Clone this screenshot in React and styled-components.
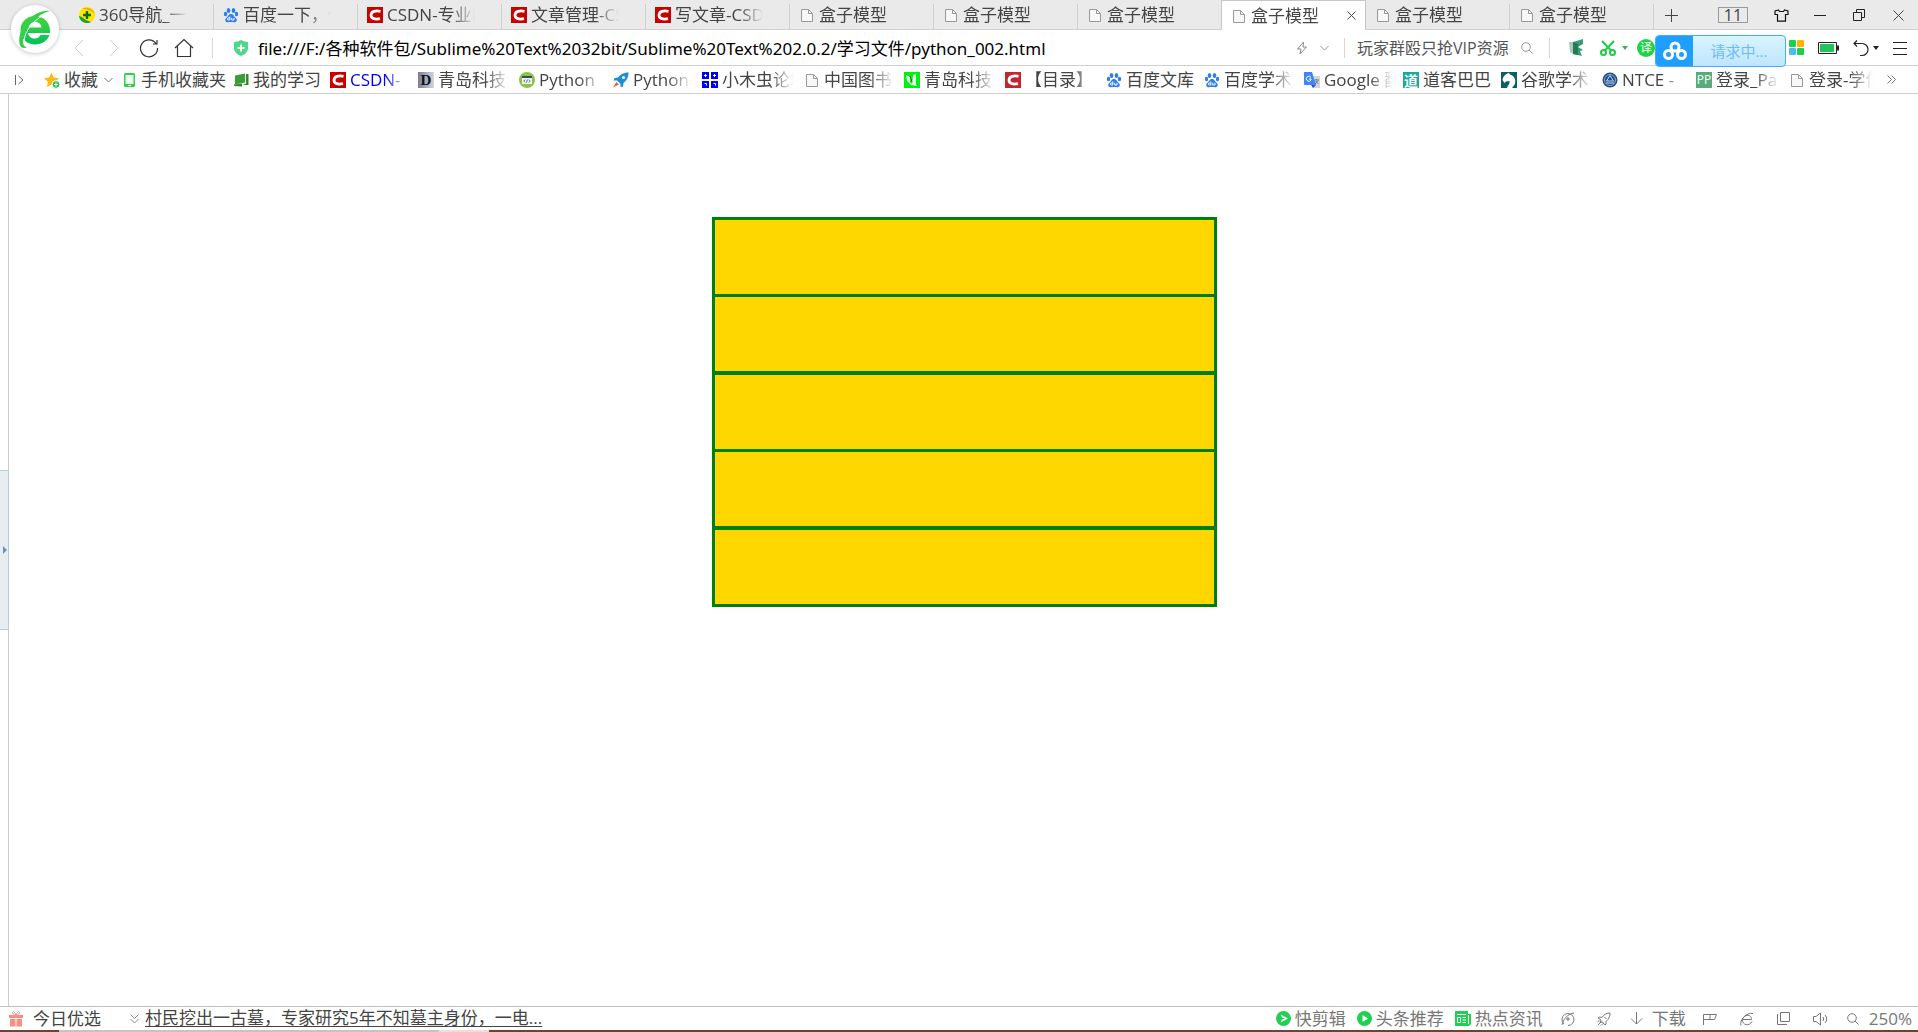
import React from "react";
import styled, { createGlobalStyle, css } from "styled-components";

const GlobalStyle = createGlobalStyle`
  * { box-sizing: border-box; }
  html, body, #root { height: 100%; }
  body {
    margin: 0;
    background: #fff;
    color: #444;
    font-family: "Open Sans", "Noto Sans CJK SC", sans-serif;
    font-size: 17px;
    line-height: 24px;
    overflow: hidden;
  }
  button, input { font: inherit; color: inherit; border: 0; background: none; padding: 0; margin: 0; }
  a { color: inherit; text-decoration: none; }
  svg { display: block; flex: none; }
`;

const fade = css`
  mask-image: linear-gradient(to right, #000 calc(100% - 24px), transparent 100%);
`;

const Window = styled.div`
  display: flex;
  flex-direction: column;
  height: 100vh;
  position: relative;
`;

const LogoButton = styled.button`
  position: absolute;
  left: 11px;
  top: 5px;
  z-index: 2;
  width: 48px;
  height: 48px;
  border-radius: 50%;
  background: #fff;
  box-shadow: 0 1px 4px rgba(0, 0, 0, 0.22);
  display: grid;
  place-items: center;
`;

/* Tab strip */
const TabStrip = styled.header`
  display: flex;
  align-items: center;
  height: 30px;
  padding-left: 70px;
  background: #eaeaea;
  box-shadow: inset 0 -1px #cfcfcf;
  flex: none;
`;

const Tabs = styled.nav`
  display: flex;
  min-width: 0;
`;

const Tab = styled.button`
  display: flex;
  align-items: center;
  gap: 4px;
  flex: 0 1 144px;
  width: 144px;
  min-width: 0;
  height: 30px;
  padding: 0 6px 0 9px;
  text-align: left;
  background: linear-gradient(#cfcfcf, #cfcfcf) right 4px / 1px 25px no-repeat;
  ${(p) => p.$active && css`
    background: #fff;
    border: 1px solid #c6c6c6;
    border-bottom: 0;
    margin-left: -1px;
    width: 145px;
    flex-basis: 145px;
  `}
`;

const TabLabel = styled.span`
  width: 88px;
  overflow: hidden;
  white-space: nowrap;
  ${fade}
`;

const IconSlot = styled.span`
  display: grid;
  place-items: center;
  width: 16px;
  height: 16px;
  flex: none;
`;

const CloseSlot = styled.span`
  margin-left: auto;
  padding-right: 3px;
`;

const IconButton = styled.button`
  display: grid;
  place-items: center;
  flex: none;
  width: ${(p) => p.$w || 24}px;
  height: 24px;
`;

const WindowControls = styled.div`
  display: flex;
  align-items: center;
  gap: 15px;
  margin-left: auto;
  padding: 0 8px 0 0;
`;

const TabCount = styled.button`
  width: 30px;
  height: 16px;
  border: 1px solid #999;
  font-size: 16px;
  line-height: 14px;
  margin-right: 6px;
`;

/* Address row */
const Toolbar = styled.div`
  display: flex;
  align-items: center;
  height: 36px;
  padding: 0 11px 0 67px;
  border-bottom: 1px solid #cfcfcf;
  flex: none;
`;

const NavButtons = styled.div`
  display: flex;
  gap: 11px;
`;

const Divider = styled.span`
  width: 1px;
  height: 20px;
  background: #d6d6d6;
  flex: none;
`;

const AddressField = styled.label`
  display: flex;
  align-items: center;
  gap: 10px;
  flex: 1;
  min-width: 0;
  padding-left: 21px;
`;

const AddressInput = styled.input`
  flex: 1;
  min-width: 0;
  height: 26px;
  color: #000;
  font-family: "Noto Sans", "Noto Sans CJK SC", sans-serif;
  outline: 0;
`;

const SearchField = styled.label`
  display: flex;
  align-items: center;
  gap: 8px;
  padding: 0 16px 0 12px;
  font-size: 16px;
`;

const SearchInput = styled.input`
  width: 156px;
  height: 24px;
  outline: 0;
  &::placeholder { color: #555; opacity: 1; }
`;

const Extensions = styled.div`
  display: flex;
  align-items: center;
  flex: none;
  gap: ${(p) => p.$gap}px;
  padding-left: ${(p) => p.$pad || 0}px;
`;

const Translate = styled.button`
  width: 18px;
  height: 18px;
  border-radius: 50%;
  background: #22d245;
  color: #fff;
  font-size: 12px;
  line-height: 18px;
  text-align: center;
`;

const CloudSlot = styled.div`
  position: relative;
  width: 131px;
  height: 32px;
  flex: none;
`;

const CloudWidget = styled.button`
  position: absolute;
  inset: 3px 0 -3px 0;
  z-index: 1;
  display: flex;
  align-items: stretch;
  border: 1px solid #4aaafc;
  border-radius: 4px;
  overflow: hidden;
  background: linear-gradient(#d9f4ff, #bfe6fd);
  color: #6cbcfa;
  font-size: 15px;
  line-height: 30px;
`;

const CloudMark = styled.span`
  display: grid;
  place-items: center;
  width: 37px;
  background: #1e9fff;
`;

const CloudText = styled.span`
  flex: 1;
  text-align: center;
`;

/* Bookmarks */
const BookmarkBar = styled.nav`
  display: flex;
  align-items: center;
  height: 28px;
  padding: 0 19px 0 10px;
  border-bottom: 1px solid #cfcfcf;
  flex: none;
`;

const BookmarkStart = styled.div`
  display: flex;
  align-items: center;
  gap: 6px;
  padding-left: 17px;
  flex: none;
`;

const Bookmarks = styled.div`
  display: flex;
  gap: 10px;
  padding-left: 8px;
  min-width: 0;
  overflow: hidden;
`;

const Bookmark = styled.a`
  display: flex;
  align-items: center;
  gap: 4px;
  flex: none;
  color: ${(p) => p.$color || "inherit"};
`;

const BookmarkLabel = styled.span`
  width: ${(p) => p.$w}px;
  white-space: nowrap;
  ${(p) => p.$fade && css`
    overflow: hidden;
    ${fade}
  `}
`;

const Spacer = styled.span`
  flex: 1;
`;

/* Page area */
const Viewport = styled.main`
  display: flex;
  flex: 1;
  min-height: 0;
`;

const Gutter = styled.aside`
  display: flex;
  align-items: center;
  width: 9px;
  border-right: 1px solid #ccc;
  flex: none;
`;

const GutterHandle = styled.button`
  display: flex;
  align-items: center;
  justify-content: flex-end;
  width: 9px;
  height: 160px;
  flex: none;
  padding-right: 1px;
  background: #e8edf2;
  border: 1px solid #b9ccd5;
  border-left: 0;
`;

const Page = styled.section`
  flex: 1;
  padding: 123px 0 0 2px;
`;

const BoxList = styled.ul`
  list-style: none;
  width: 505px;
  margin: 0 auto;
  padding: 0;
`;

const Box = styled.li`
  height: 80px;
  background: gold;
  border: 3px solid green;
  margin-top: -3px;
  &:nth-child(odd) { margin-top: -2px; }
  &:first-child { margin-top: 0; }
`;

/* Status bar */
const StatusBar = styled.footer`
  display: flex;
  align-items: center;
  height: 24px;
  padding: 0 6px 0 8px;
  border-top: 1px solid #bfbfbf;
  flex: none;
`;

const StatusLink = styled.a`
  display: flex;
  align-items: center;
  gap: ${(p) => p.$gap || 4}px;
  height: 23px;
  white-space: nowrap;
`;

const Headline = styled.a`
  margin-left: 6px;
  height: 23px;
  line-height: 22px;
  white-space: nowrap;
  text-decoration: underline;
  text-decoration-thickness: 1px;
  text-underline-offset: 2px;
`;

const StatusGroup = styled.div`
  display: flex;
  align-items: center;
  gap: ${(p) => p.$gap}px;
  color: #777;
  margin-left: ${(p) => p.$left}px;
`;

const Taskbar = styled.div`
  height: 2px;
  flex: none;
  background: linear-gradient(to right, #6b452c 59px, #c4c4c4 59px, #c4c4c4 439px, #eadfd9 439px, #eadfd9 489px, #6b452c 489px);
`;

/* Icons */
const Stroke = ({ w = 16, h = 16, c = "#444", sw = 1, children, fill = "none" }) => (
  <svg width={w} height={h} viewBox={`0 0 ${w} ${h}`} fill={fill} stroke={c} strokeWidth={sw} aria-hidden="true">
    {children}
  </svg>
);

const BrowserLogo = () => (
  <svg width="34" height="40" viewBox="0 0 34 40" aria-hidden="true">
    <defs>
      <linearGradient id="lg" x1="0" y1="0" x2="0" y2="1">
        <stop offset="0" stopColor="#46d63c" />
        <stop offset="1" stopColor="#00c25a" />
      </linearGradient>
    </defs>
    <path fill="url(#lg)" fillRule="evenodd" d="M17 7C9 7 2.500 13 2.500 21C2.500 29.500 9 35.500 17 35.500C24 35.500 29.500 31.500 31.500 26H22.500C21 28.500 19.300 29.500 17 29.500C13.300 29.500 10.500 27.500 10 24H32C33 14 26 7 17 7ZM10.300 18.500C11 15 14 12.800 17 12.800C20.500 12.800 23 15 23.500 18.500Z" />
    <path fill="#35d049" d="M32 2C22 0 8 9 3 22C0 30 1 37 4 38.500C6 39.400 8 39 9 38C5 38 4 33 6 27C9 17 19 5 32 2Z" />
    <path fill="none" stroke="#fff" strokeWidth="1" d="M28 5.500C18 9 10 18 7 27C6 31 6 34 7.500 36" />
  </svg>
);

const PageIcon = () => (
  <Stroke w={12} h={14} c="#999">
    <path d="M.5 1.500H7.500L11.500 5.500V13.500H.5Z" fill="#f8f8f8" />
    <path d="M7.500 1.500V5.500H11.500" />
  </Stroke>
);

const NavIcon = () => (
  <svg width="16" height="16" viewBox="0 0 16 16" aria-hidden="true">
    <circle cx="8" cy="8" r="8" fill="#ffe800" />
    <path d="M0 9C3 9 5 13 12 14.900A8 8 0 0 1 0 9Z" fill="#19a23a" />
    <path d="M3 2C8-1 15 2 16 8C13 3 8 2 3 2Z" fill="#f5a800" />
    <path d="M8 4V12M4 8H12" stroke="#066b24" strokeWidth="2.400" />
  </svg>
);

const PawIcon = () => (
  <svg width="16" height="16" viewBox="0 0 16 16" fill="#2f7df0" aria-hidden="true">
    <ellipse cx="5.500" cy="3.500" rx="1.800" ry="2.500" />
    <ellipse cx="10.500" cy="3.500" rx="1.800" ry="2.500" />
    <ellipse cx="2.500" cy="7" rx="1.700" ry="2.200" />
    <ellipse cx="13.500" cy="7" rx="1.700" ry="2.200" />
    <path d="M8 7C5.500 7 5 9.500 3.500 10.800C1 13 2.500 15.500 5 15.300C7 15 9 15 11 15.300C13.500 15.500 15 13 12.500 10.800C11 9.500 10.500 7 8 7Z" />
    <path d="M6.800 9.500V13H5.300C4 13 4 11 5.300 11H6.800M8.700 10.800V13H11V10.800" stroke="#fff" fill="none" />
  </svg>
);

const CIcon = ({ bg = "#c80000" }) => (
  <svg width="16" height="16" viewBox="0 0 16 16" aria-hidden="true">
    <path fill={bg} d="M0 0H16V16H0Z" />
    <path d="M13.500 4.300C9 3.200 4 4.300 4 8.200C4 12 8.500 12.600 13 11.600" fill="none" stroke="#fff" strokeWidth="2.800" />
  </svg>
);

const LetterIcon = styled.span`
  width: 16px;
  height: 16px;
  background: ${(p) => p.$bg};
  color: ${(p) => p.$fg};
  font: ${(p) => p.$font};
  line-height: 16px;
  text-align: center;
  overflow: hidden;
`;

const StarIcon = () => (
  <svg width="16" height="17" viewBox="0 0 16 17" aria-hidden="true">
    <path d="M7.500 .5L9.800 5.500L15 6.200L11.200 9.800L12 15L7.500 12.600L3 15L3.800 9.800L0 6.200L5.200 5.500Z" fill="#fdb813" />
    <circle cx="12" cy="12.500" r="3.900" fill="#2cc552" stroke="#fff" />
    <path d="M12 10.500V14.500M10 12.500H14" stroke="#fff" />
  </svg>
);

const PhoneIcon = () => (
  <svg width="11" height="14" viewBox="0 0 11 14" aria-hidden="true">
    <rect width="11" height="14" rx="1.500" fill="#2fd04e" />
    <path d="M1.500 2H9.500V11H1.500Z" fill="#effff0" />
    <path d="M4 12.500H7" stroke="#fff" />
  </svg>
);

const BookIcon = () => (
  <svg width="15" height="14" viewBox="0 0 15 14" aria-hidden="true">
    <path d="M1 2.500L11 .5V9.500L1 11.500Z" fill="#3a9e35" />
    <path d="M12 1H14.500V12H9L12 10.500Z" fill="#2f8b2b" />
    <path d="M0 11L1 11.500L8 10.500V13.500L0 13Z" fill="#2f8b2b" />
  </svg>
);

const CodeIcon = () => (
  <svg width="16" height="16" viewBox="0 0 16 16" aria-hidden="true">
    <circle cx="8" cy="8" r="8" fill="#8bc34a" />
    <path d="M3 4H13V12H3Z" fill="#f0f4f5" />
    <path d="M3 4H13V6H3Z" fill="#31505c" />
    <path d="M6.200 7.500L4.800 9L6.200 10.500M9.800 7.500L11.200 9L9.800 10.500M8.500 7.500L7.500 10.500" fill="none" stroke="#31505c" strokeWidth=".8" />
  </svg>
);

const RocketColor = () => (
  <svg width="16" height="16" viewBox="0 0 16 16" aria-hidden="true">
    <path d="M15.500 .5C10 .5 7 3 5 5.500L1.500 6L.5 8.500L4 8.500L7.500 12L7.500 15L10 14.500L10.500 11C13 9 15.500 6 15.500 .5Z" fill="#1b8fd6" />
    <circle cx="10.500" cy="5.500" r="1.600" fill="#fff" />
    <path d="M3.500 10L0 15.500L6 12.500Z" fill="#f0633c" />
  </svg>
);

const MuchongIcon = () => (
  <svg width="16" height="16" viewBox="0 0 16 16" aria-hidden="true">
    <path fill="#0000f5" d="M0 0H7V7H0ZM9 0H16V7H9ZM0 9H7V16H0ZM9 9H16V16H9Z" />
    <path d="M2 3.500H5M3.500 2V5M11 3.500H14M12.500 2V5M2.500 11.500H4.500V13.500M11.500 11.500H13.500V13.500" stroke="#fff" fill="none" />
  </svg>
);

const GreenUIcon = () => (
  <svg width="16" height="16" viewBox="0 0 16 16" aria-hidden="true">
    <path fill="#00f010" d="M0 0H16V16H0Z" />
    <path d="M2 3L6 5V10L8 12L9 3L12 2V12L13 14L7 13L3 9Z" fill="#e7fbe8" />
    <path d="M6 4L8 10" stroke="#167a25" />
  </svg>
);

const TranslateIcon = () => (
  <svg width="16" height="16" viewBox="0 0 16 16" aria-hidden="true">
    <path d="M6 4H16V16H9Z" fill="#d2d6dc" />
    <path d="M0 0H8L12 13H1Q0 13 0 12Z" fill="#4285f4" />
    <path d="M7 13H12L9 16Z" fill="#2a56c6" />
    <path d="M7 5.500A2.500 2.500 0 1 0 7 8V7H5" fill="none" stroke="#fff" />
    <path d="M10.500 8H15M12.700 7V8M14 8.500L11 12M11.500 9L14.500 12" stroke="#566" strokeWidth=".8" fill="none" />
  </svg>
);

const HorseIcon = () => (
  <svg width="16" height="16" viewBox="0 0 16 16" aria-hidden="true">
    <path fill="#0a5f5f" d="M0 0H16V16H0Z" />
    <path d="M1.500 8C2 4 5 1.500 8 1L9 2.500C13 3.500 15 7 14 12L11 16H6C7 13 9 12 8.500 9L5 9.500L3.500 11Z" fill="#fff" />
  </svg>
);

const NtceIcon = () => (
  <svg width="16" height="16" viewBox="0 0 16 16" aria-hidden="true">
    <circle cx="8" cy="8" r="7.500" fill="#1f4e8c" />
    <circle cx="8" cy="8" r="5.500" fill="none" stroke="#a9c0dd" strokeWidth=".8" />
    <path d="M8 3.500L4.500 9H11.500ZM4 11H12" fill="none" stroke="#c9d8ea" />
  </svg>
);

const ChevronDown = ({ c = "#777" }) => (
  <Stroke w={9} h={6} c={c}><path d="M.5 1L4.500 5L8.500 1" /></Stroke>
);

const SearchIcon = ({ c = "#999" }) => (
  <Stroke w={12} h={12} c={c}><circle cx="5" cy="5" r="4.300" /><path d="M8 8L11.500 11.500" /></Stroke>
);

const CloseIcon = ({ size = 10 }) => (
  <Stroke w={size} h={size} c="#444"><path d={`M.5 .5L${size - 0.5} ${size - 0.5}M${size - 0.5} .5L.5 ${size - 0.5}`} /></Stroke>
);

const TABS = [
  { icon: <NavIcon />, title: "360导航_一个主页" },
  { icon: <PawIcon />, title: "百度一下，你就知道" },
  { icon: <CIcon />, title: "CSDN-专业IT技术" },
  { icon: <CIcon />, title: "文章管理-CSDN" },
  { icon: <CIcon />, title: "写文章-CSDN" },
  { icon: <PageIcon />, title: "盒子模型" },
  { icon: <PageIcon />, title: "盒子模型" },
  { icon: <PageIcon />, title: "盒子模型" },
  { icon: <PageIcon />, title: "盒子模型", active: true },
  { icon: <PageIcon />, title: "盒子模型" },
  { icon: <PageIcon />, title: "盒子模型" },
];

const BOOKMARKS = [
  { icon: <PhoneIcon />, title: "手机收藏夹", w: 82, plain: true },
  { icon: <BookIcon />, title: "我的学习", w: 67, plain: true },
  { icon: <CIcon />, title: "CSDN-", w: 58, color: "#0000ee" },
  { icon: <LetterIcon $bg="linear-gradient(90deg,#7b7b93,#d5d5e0)" $fg="#111" $font="bold 15px 'Liberation Serif', serif">D</LetterIcon>, title: "青岛科技大学", w: 71 },
  { icon: <CodeIcon />, title: "Python", w: 64 },
  { icon: <RocketColor />, title: "Python基", w: 59 },
  { icon: <MuchongIcon />, title: "小木虫论坛", w: 72 },
  { icon: <PageIcon />, title: "中国图书馆", w: 70 },
  { icon: <GreenUIcon />, title: "青岛科技大", w: 71 },
  { icon: <CIcon bg="#c1272d" />, title: "【目录】", w: 71 },
  { icon: <PawIcon />, title: "百度文库", w: 68, plain: true },
  { icon: <PawIcon />, title: "百度学术_", w: 70 },
  { icon: <TranslateIcon />, title: "Google 翻", w: 69 },
  { icon: <LetterIcon $bg="#18a99a" $fg="#fff" $font="bold 14px 'Noto Sans CJK SC', sans-serif">道</LetterIcon>, title: "道客巴巴", w: 68, plain: true },
  { icon: <HorseIcon />, title: "谷歌学术镜", w: 71 },
  { icon: <NtceIcon />, title: "NTCE -", w: 64 },
  { icon: <LetterIcon $bg="#57ab7c" $fg="#fff" $font="12px 'Open Sans', sans-serif">PP</LetterIcon>, title: "登录_Pap", w: 63 },
  { icon: <PageIcon />, title: "登录-学信", w: 64 },
];

export default function App() {
  return (
    <Window>
      <GlobalStyle />
      <LogoButton aria-label="浏览器"><BrowserLogo /></LogoButton>

      <TabStrip>
        <Tabs>
          {TABS.map((tab, i) => (
            <Tab key={i} $active={tab.active}>
              <IconSlot>{tab.icon}</IconSlot>
              <TabLabel>{tab.title}</TabLabel>
              {tab.active && <CloseSlot><CloseIcon size={9} /></CloseSlot>}
            </Tab>
          ))}
        </Tabs>
        <IconButton $w={34} aria-label="新建标签">
          <Stroke w={13} h={13}><path d="M6.500 0V13M0 6.500H13" /></Stroke>
        </IconButton>
        <WindowControls>
          <TabCount>11</TabCount>
          <IconButton aria-label="皮肤">
            <Stroke w={15} h={13} c="#111" sw={1.2}><path d="M4.500 1L1 2V5.500H3.500V12.200H11.500V5.500H14V2L10.500 1L9.500 2.500H5.500Z" /></Stroke>
          </IconButton>
          <IconButton aria-label="最小化"><Stroke w={12} h={12} c="#222"><path d="M0 6.500H12" /></Stroke></IconButton>
          <IconButton aria-label="还原">
            <Stroke w={12} h={12} c="#222"><path d="M.5 3.500H8.500V11.500H.5ZM3.500 3.500V.5H11.500V8.500H8.500" /></Stroke>
          </IconButton>
          <IconButton aria-label="关闭"><CloseIcon size={11} /></IconButton>
        </WindowControls>
      </TabStrip>

      <Toolbar>
        <NavButtons>
          <IconButton aria-label="后退"><Stroke w={10} h={18} c="#ccc"><path d="M9 1L1 9L9 17" /></Stroke></IconButton>
          <IconButton aria-label="前进"><Stroke w={10} h={18} c="#ccc"><path d="M1 1L9 9L1 17" /></Stroke></IconButton>
          <IconButton aria-label="刷新">
            <Stroke w={20} h={20} sw={1.2} c="#333"><path d="M17 5.500A8.500 8.500 0 1 0 18.500 10M18 2V6H14" /></Stroke>
          </IconButton>
          <IconButton aria-label="主页">
            <Stroke w={20} h={20} sw={1.2} c="#333"><path d="M1 10L10 1.500L19 10M3.500 8.500V18.500H16.500V8.500" /></Stroke>
          </IconButton>
        </NavButtons>
        <Extensions $pad={16}><Divider /></Extensions>
        <AddressField>
          <svg width="14" height="16" viewBox="0 0 14 16" aria-hidden="true">
            <path d="M0 2Q4 2 7 0Q10 2 14 2V9Q13 14 7 16Q1 14 0 9Z" fill="#4cd989" />
            <path d="M7 4.500V11.500M3.500 8H10.500" stroke="#fff" strokeWidth="2" />
          </svg>
          <AddressInput aria-label="地址" defaultValue="file:///F:/各种软件包/Sublime%20Text%2032bit/Sublime%20Text%202.0.2/学习文件/python_002.html" />
        </AddressField>
        <Extensions $gap={12}>
          <Stroke w={12} h={14} c="#888"><path d="M7.500 1L1.500 8H5L4 13L10.500 6H7Z" /></Stroke>
          <ChevronDown c="#999" />
          <Extensions $pad={3}><Divider /></Extensions>
        </Extensions>
        <SearchField>
          <SearchInput aria-label="搜索" placeholder="玩家群殴只抢VIP资源" />
          <SearchIcon />
        </SearchField>
        <Divider />
        <Extensions $pad={19}>
          <svg width="14" height="18" viewBox="0 0 14 18" aria-hidden="true">
            <path d="M4 3L14 0V5L9 8L14 11L11 12L13 17L4 15Z" fill="#3b9c72" />
            <path d="M0 3L4 3V15L1 13Z" fill="#a8c8b8" />
            <path d="M4 3L9 5V16L4 15Z" fill="#267a56" />
          </svg>
        </Extensions>
        <Extensions $pad={17} $gap={6}>
          <Stroke w={16} h={16} c="#1fcc45" sw={2}>
            <circle cx="3.500" cy="12.500" r="2.500" /><circle cx="12.500" cy="12.500" r="2.500" /><path d="M2 1L11 10.500M14 1L5 10.500" />
          </Stroke>
          <svg width="6" height="4" viewBox="0 0 6 4"><path d="M0 0H6L3 4Z" fill="#2bbb4c" /></svg>
        </Extensions>
        <Extensions $pad={9}><Translate>译</Translate></Extensions>
        <CloudSlot>
          <CloudWidget>
            <CloudMark>
              <Stroke w={26} h={20} c="#fff" sw={3}>
                <circle cx="13" cy="6" r="4" /><circle cx="6.500" cy="13.500" r="4" /><circle cx="19.500" cy="13.500" r="4" />
              </Stroke>
            </CloudMark>
            <CloudText>请求中...</CloudText>
          </CloudWidget>
        </CloudSlot>
        <Extensions $pad={3} $gap={14}>
          <svg width="15" height="15" viewBox="0 0 15 15" aria-hidden="true">
            <rect width="7" height="7" rx="1" fill="#1fcf4c" /><rect x="8" width="7" height="7" rx="1" fill="#ffb400" />
            <rect y="8" width="7" height="7" rx="1" fill="#4fb8f0" /><rect x="8" y="8" width="7" height="7" rx="1" fill="#1fcf4c" />
          </svg>
          <svg width="21" height="12" viewBox="0 0 21 12" aria-hidden="true">
            <path d="M.5 .5H18.500V11.500H.5Z" fill="none" stroke="#222" /><path d="M2 2H16V10H2Z" fill="#22c55b" /><path d="M19 3.500H21V8.500H19Z" fill="#222" />
          </svg>
          <Extensions $gap={4}>
            <Stroke w={16} h={18} c="#222" sw={1.2}><path d="M1 4.500H9A6 6 0 0 1 9 16.500H7M4 1.500L1 4.500L4 7.500" /></Stroke>
            <svg width="6" height="4" viewBox="0 0 6 4"><path d="M0 0H6L3 4Z" fill="#222" /></svg>
          </Extensions>
          <Stroke w={14} h={14} c="#222"><path d="M0 1.500H14M0 7.500H14M0 13.500H14" /></Stroke>
        </Extensions>
      </Toolbar>

      <BookmarkBar>
        <IconButton $w={17} aria-label="收起"><Stroke w={10} h={12} c="#666"><path d="M1.500 1V11M4.500 2L9 6L4.500 10" /></Stroke></IconButton>
        <BookmarkStart>
          <Bookmark href="#"><IconSlot><StarIcon /></IconSlot>收藏</Bookmark>
          <ChevronDown />
        </BookmarkStart>
        <Bookmarks>
          {BOOKMARKS.map((b, i) => (
            <Bookmark key={i} href="#" $color={b.color}>
              <IconSlot>{b.icon}</IconSlot>
              <BookmarkLabel $w={b.w} $fade={!b.plain}>{b.title}</BookmarkLabel>
            </Bookmark>
          ))}
        </Bookmarks>
        <Spacer />
        <IconButton $w={16} aria-label="更多">
          <Stroke w={9} h={9} c="#777"><path d="M.5 .5L4.500 4.500L.5 8.500M4.500 .5L8.500 4.500L4.500 8.500" /></Stroke>
        </IconButton>
      </BookmarkBar>

      <Viewport>
        <Gutter>
          <GutterHandle aria-label="展开侧栏">
            <svg width="4" height="8" viewBox="0 0 4 8"><path d="M0 0L4 4L0 8Z" fill="#6c97b0" /></svg>
          </GutterHandle>
        </Gutter>
        <Page>
          <BoxList>
            <Box /><Box /><Box /><Box /><Box />
          </BoxList>
        </Page>
      </Viewport>

      <StatusBar>
        <StatusLink href="#" $gap={9}>
          <svg width="16" height="16" viewBox="0 0 16 16" aria-hidden="true">
            <path d="M1 4H15V7H1ZM2 8H7.500V15.500H2ZM8.500 8H14V15.500H8.500Z" fill="#fb8d84" />
            <path d="M8 4C5 4 3 .5 5.500 .8C7 1 8 4 8 4C8 4 9 1 10.500 .8C13 .5 11 4 8 4Z" fill="none" stroke="#fb8d84" />
          </svg>
          今日优选
        </StatusLink>
        <StatusGroup $left={29}>
          <Stroke w={9} h={10} c="#888"><path d="M.5 .5L4.500 4.500L8.500 .5M.5 5L4.500 9L8.500 5" /></Stroke>
        </StatusGroup>
        <Headline href="#">村民挖出一古墓，专家研究5年不知墓主身份，一电...</Headline>
        <Spacer />
        <StatusGroup $gap={11}>
          <StatusLink href="#">
            <svg width="15" height="15" viewBox="0 0 15 15"><circle cx="7.500" cy="7.500" r="7.500" fill="#1fd052" /><path d="M4.500 3.500L12 7.500L4.500 11.500L6 8.500L9 7.500L6 6.500Z" fill="#fff" /></svg>
            快剪辑
          </StatusLink>
          <StatusLink href="#">
            <svg width="15" height="15" viewBox="0 0 15 15"><circle cx="7.500" cy="7.500" r="7.500" fill="#1fd052" /><path d="M5.500 4L11 7.500L5.500 11Z" fill="#fff" /></svg>
            头条推荐
          </StatusLink>
          <StatusLink href="#">
            <svg width="16" height="15" viewBox="0 0 16 15"><path d="M0 0H13V3H16V13L14 15H0Z" fill="#1fd052" /><path d="M2 3.500H11M2.500 6.500H5.500V11.500H2.500ZM7.500 6.500H11M7.500 9H11M7.500 11.500H11M13.500 4V13" fill="none" stroke="#fff" /></svg>
            热点资讯
          </StatusLink>
        </StatusGroup>
        <StatusGroup $left={18} $gap={22}>
          <Stroke w={14} h={14} c="#777"><path d="M3 12A6 6 0 1 1 7 13.500M1 13C2 8 6 2 13 1M7 5V9M5 7H9" /></Stroke>
          <Stroke w={14} h={14} c="#777"><path d="M13 1C9 1 6.500 3 5 5.500L2.500 5L1 6L4 8L3 10.500L5.500 10L8 13L9 12L9 9.500C12 7 13 4 13 1ZM1 13L4.500 9.500M4 13.500L6 11.500M.5 10L2.500 8.500M7.500 5L9.500 7" /></Stroke>
        </StatusGroup>
        <StatusGroup $left={19}>
          <StatusLink href="#" $gap={9}>
            <Stroke w={13} h={13} c="#777"><path d="M6.500 0V12M1 6.500L6.500 12L12 6.500" /></Stroke>
            下载
          </StatusLink>
        </StatusGroup>
        <StatusGroup $left={17} $gap={23}>
          <Stroke w={14} h={12} c="#777"><path d="M.5 12V1.500H13.500L11.500 6.500H.5M7 1.500V6.500" /></Stroke>
          <Stroke w={14} h={14} c="#777"><path d="M12 9.500C9 15 2 13 2.500 7.500C3.500 2 12 2 11.500 7.500H3M1 13.500C-1 8 7 0 13 1.500" /></Stroke>
          <Stroke w={13} h={13} c="#777"><path d="M3.500 .5H12.500V9.500H3.500ZM.5 2V12.500H10" /></Stroke>
          <Stroke w={16} h={14} c="#777"><path d="M.5 4.500H3L7.500 1V13L3 9.500H.5ZM10 5Q11.500 7 10 9M12 3Q15.500 7 12 11" /></Stroke>
        </StatusGroup>
        <StatusGroup $left={18} $gap={10}>
          <SearchIcon c="#777" />
          <span>250%</span>
        </StatusGroup>
      </StatusBar>
      <Taskbar />
    </Window>
  );
}
